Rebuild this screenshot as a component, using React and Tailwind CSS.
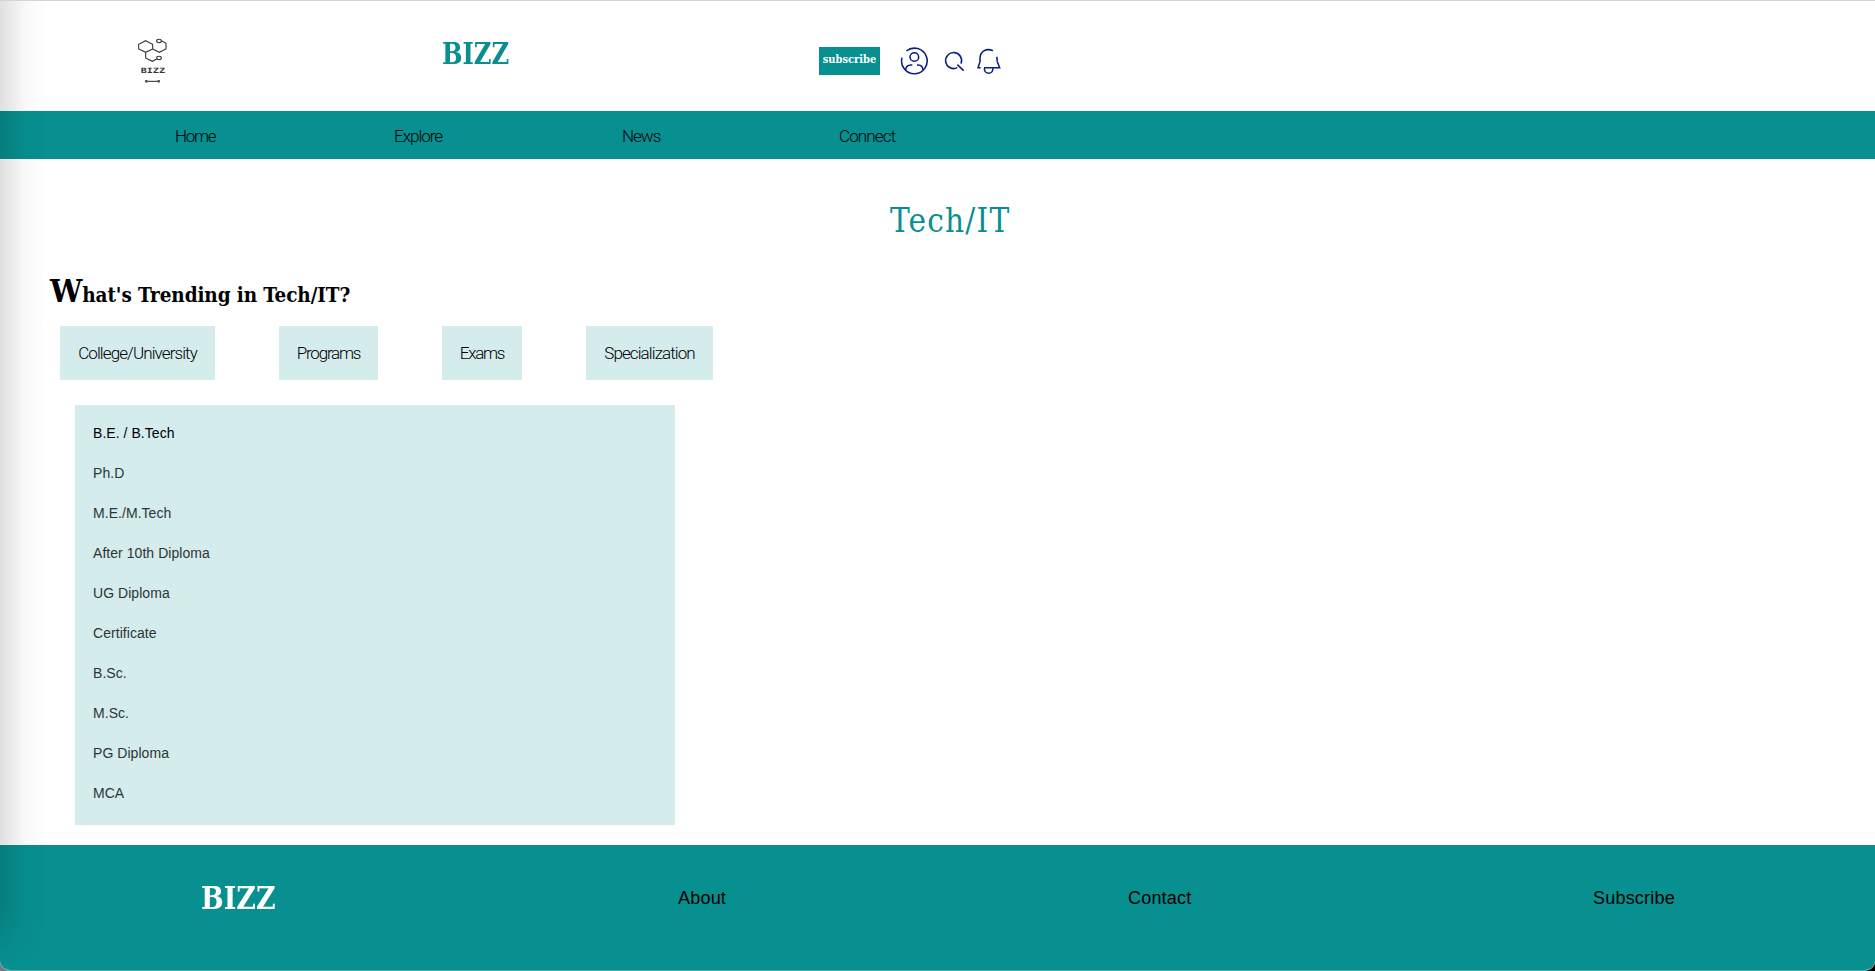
const serif = "font-['DejaVu_Serif_Condensed','DejaVu_Serif',serif]";

const courses = ["Ph.D", "M.E./M.Tech", "After 10th Diploma", "UG Diploma", "Certificate", "B.Sc.", "M.Sc.", "PG Diploma", "MCA"];

function Logo() {
  return (
    <svg className="ml-[120px] mt-[24px] h-[70px] w-[70px] shrink-0" viewBox="0 0 210 210" fill="none" stroke="#333" strokeWidth="3.2">
      <path d="M77 47 L98 58 V72 L77 82 L56 72 V58 Z M98 72 L118 82 L138 72 V55 L124 47 M77 82 V99 L97 109 L110 102" />
      <ellipse cx="117" cy="48" rx="7" ry="5" />
      <ellipse cx="117" cy="99" rx="7" ry="5" />
      <path d="M82 169 H113" />
      <circle cx="79" cy="169" r="2.5" />
      <circle cx="116" cy="169" r="2.5" />
      <text x="62" y="143" textLength="73" lengthAdjust="spacingAndGlyphs" fontFamily="DejaVu Sans Mono" fontWeight="700" fontSize="22" fill="#333" stroke="none">BIZZ</text>
    </svg>
  );
}

function HeaderIcons() {
  return (
    <svg className="ml-[20px] mt-[29px] h-[60px] w-[110px] shrink-0" viewBox="300 0 330 180" fill="none" stroke="#0b1f80" strokeWidth="4.6">
      <path d="M306 83 A38.400 38.400 0 1 0 319 63" />
      <circle cx="343" cy="81" r="13" />
      <path d="M317 121 Q317 105 333 105 H337 M351 105 H354 Q369 105 369 121" />
      <path d="M472 113 A24 24 0 1 1 483 101 M472 104 L491 122" />
      <path d="M579 62 C558 53 540 65 540 85 V95 L534 113 H542 M590 80 C592 86 591 90 592 95 L599 113 H552 M553 115 C553 135 579 135 579 115" />
    </svg>
  );
}

function Tab({ children, className }) {
  return <button className={`h-[54px] whitespace-nowrap bg-[#d5ecec] pt-[2px] text-center ${className}`}>{children}</button>;
}

export default function App() {
  return (
    <div className="relative h-[971px] w-[1875px] overflow-hidden bg-[linear-gradient(90deg,#777_50%,#000_50%)] font-['Liberation_Sans',sans-serif] text-black">
      <div className="flex h-full flex-col overflow-hidden rounded-b-[10px] border-b border-[#4bb0b0] bg-white">
        <header className="flex h-[111px] items-start border-t border-[#d4d4d4]">
          <Logo />
          <h1 className={`${serif} ml-[252px] mt-[34px] w-[72px] origin-left scale-x-[0.930] whitespace-nowrap text-[29px] font-bold leading-[38px] text-[#088f8f]`}>BIZZ</h1>
          <button className={`${serif} ml-[305px] mt-[46px] flex h-[28px] w-[61px] items-center justify-center whitespace-nowrap bg-[#088f8f] pb-[1px] text-[11px] font-bold text-white`}>subscribe</button>
          <HeaderIcons />
        </header>
        <nav className="flex h-[48px] items-center bg-[#088f8f] pl-[175px] pt-[4px] font-[Roboto,sans-serif] text-[17px] font-light tracking-[-1px]">
          <a className="w-[219px] tracking-[-1.300px]">Home</a>
          <a className="w-[228px]">Explore</a>
          <a className="w-[217px]">News</a>
          <a className="tracking-[-0.850px]">Connect</a>
        </nav>
        <main className="flex h-[686px] flex-col items-start">
          <h2 className={`${serif} ml-[890px] mt-[40px] whitespace-nowrap text-[33px] leading-[44px] tracking-[1.200px] text-[#088f8f]`}>Tech/IT</h2>
          <h3 className={`${serif} ml-[50px] mt-[24px] h-[49px] whitespace-nowrap text-[20.500px] font-bold leading-[48px] tracking-[-0.100px]`}><span className="text-[32px]">W</span>hat's Trending in Tech/IT?</h3>
          <div className="ml-[60px] mt-[10px] flex gap-[64px] font-[Roboto,sans-serif] text-[17px] font-light tracking-[-0.900px]">
            <Tab className="w-[155px]">College/University</Tab>
            <Tab className="w-[99px] tracking-[-1.200px]">Programs</Tab>
            <Tab className="w-[80px] tracking-[-1.300px]">Exams</Tab>
            <Tab className="w-[127px]">Specialization</Tab>
          </div>
          <ul className="ml-[75px] mt-[25px] h-[420px] w-[600px] bg-[#d5ecec] pl-[18px] pt-[8px] text-[14px] leading-[40px] tracking-[0.050px] text-[#2e3434]">
            <li className="text-black">B.E. / B.Tech</li>
            {courses.map((course) => <li key={course}>{course}</li>)}
          </ul>
        </main>
        <footer className="flex flex-1 items-start bg-[#088f8f] pl-[201px] text-[18px] leading-[28px] tracking-[0.200px]">
          <strong className={`${serif} mt-[31px] w-[477px] origin-left scale-x-[0.920] text-[32.500px] leading-[44px] tracking-normal text-white`}>BIZZ</strong>
          <a className="mt-[39px] w-[450px]">About</a>
          <a className="mt-[39px] w-[465px]">Contact</a>
          <a className="mt-[39px]">Subscribe</a>
        </footer>
      </div>
      <div className="pointer-events-none absolute left-0 top-[1px] h-[970px] w-[46px] rounded-bl-[10px] bg-[linear-gradient(90deg,rgba(0,0,0,0.12),rgba(0,0,0,0.08)_25%,rgba(0,0,0,0.025)_55%,transparent)] [mask-image:linear-gradient(to_bottom,black_900px,transparent_965px)]" />
    </div>
  );
}
